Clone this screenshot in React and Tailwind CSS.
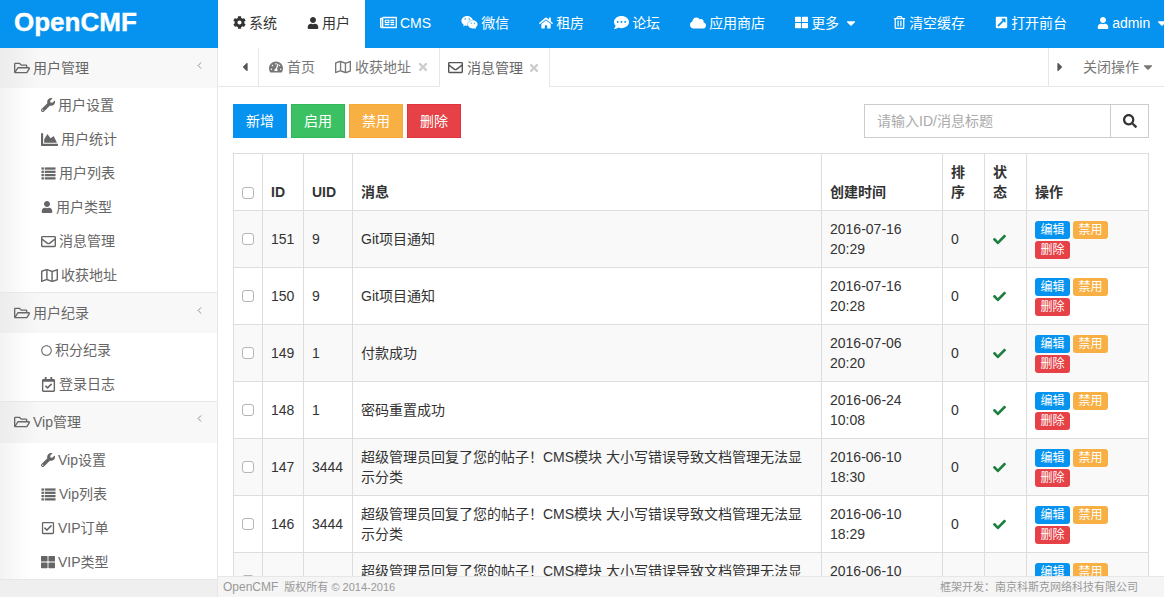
import {
  FaCaretDown, FaCaretLeft, FaCaretRight, FaChartArea, FaCheck, FaCloud, FaCog, FaCommentDots,
  FaExternalLinkSquareAlt, FaHome, FaRegCalendarCheck, FaRegCheckSquare, FaRegCircle, FaRegEnvelope,
  FaRegFolderOpen, FaRegMap, FaRegNewspaper, FaRegTrashAlt, FaSearch, FaTachometerAlt, FaThLarge, FaTimes,
  FaUser, FaWeixin, FaWrench,
} from 'react-icons/fa';
import { ChevronLeft } from 'lucide-react';

const font = { fontFamily: '"Liberation Sans", "Noto Sans CJK SC", sans-serif' };

function ListIcon({ className }) {
  return (
    <svg viewBox="0 0 16 16" fill="currentColor" width="1em" height="1em" className={className}>
      <rect x="0.5" y="1.5" width="2.6" height="2.4" />
      <rect x="4" y="1.5" width="11.5" height="2.4" />
      <rect x="0.5" y="5" width="2.6" height="2.4" />
      <rect x="4" y="5" width="11.5" height="2.4" />
      <rect x="0.5" y="8.5" width="2.6" height="2.4" />
      <rect x="4" y="8.5" width="11.5" height="2.4" />
      <rect x="0.5" y="12" width="2.6" height="2.4" />
      <rect x="4" y="12" width="11.5" height="2.4" />
    </svg>
  );
}

const topNav = [
  { icon: FaRegNewspaper, label: 'CMS', size: 'text-[17px]' },
  { icon: FaWeixin, label: '微信', size: 'text-[17px]' },
  { icon: FaHome, label: '租房', size: 'text-[14px]' },
  { icon: FaCommentDots, label: '论坛', size: 'text-[15px]' },
  { icon: FaCloud, label: '应用商店', size: 'text-[16px]' },
];

const sideMenu = [
  {
    title: '用户管理',
    head: 'h-10',
    items: [
      { icon: FaWrench, label: '用户设置', size: 'text-[14px]' },
      { icon: FaChartArea, label: '用户统计', size: 'text-[17px]' },
      { icon: ListIcon, label: '用户列表', size: 'text-[15px]' },
      { icon: FaUser, label: '用户类型', size: 'text-[12px]' },
      { icon: FaRegEnvelope, label: '消息管理', size: 'text-[15px]' },
      { icon: FaRegMap, label: '收获地址', size: 'text-[17px]' },
    ],
  },
  {
    title: '用户纪录',
    head: 'h-[41px] border-t border-[#e7e7e7]',
    items: [
      { icon: FaRegCircle, label: '积分纪录', size: 'text-[11px]' },
      { icon: FaRegCalendarCheck, label: '登录日志', size: 'text-[15px]' },
    ],
  },
  {
    title: 'Vip管理',
    head: 'h-[42px] border-t border-[#e7e7e7] pb-[2px]',
    items: [
      { icon: FaWrench, label: 'Vip设置', size: 'text-[14px]' },
      { icon: ListIcon, label: 'Vip列表', size: 'text-[15px]' },
      { icon: FaRegCheckSquare, label: 'VIP订单', size: 'text-[14px]' },
      { icon: FaThLarge, label: 'VIP类型', size: 'text-[14px]' },
    ],
  },
];

const longMsg = '超级管理员回复了您的帖子！CMS模块 大小写错误导致文档管理无法显示分类';

const rows = [
  { id: 151, uid: 9, msg: 'Git项目通知', date: '2016-07-16', time: '20:29' },
  { id: 150, uid: 9, msg: 'Git项目通知', date: '2016-07-16', time: '20:28' },
  { id: 149, uid: 1, msg: '付款成功', date: '2016-07-06', time: '20:20' },
  { id: 148, uid: 1, msg: '密码重置成功', date: '2016-06-24', time: '10:08' },
  { id: 147, uid: 3444, msg: longMsg, date: '2016-06-10', time: '18:30' },
  { id: 146, uid: 3444, msg: longMsg, date: '2016-06-10', time: '18:29' },
  { id: 145, uid: 3444, msg: longMsg, date: '2016-06-10', time: '18:28' },
];

function Checkbox({ className = '' }) {
  return <input type="checkbox" className={`block h-[12px] w-[12px] appearance-none rounded-[3px] border border-[#b5b5b5] bg-white ${className}`} />;
}

function Label({ color, children }) {
  return <span className={`inline-block h-[18px] w-[35px] rounded-[3px] text-center text-[12px] leading-[18px] text-white ${color}`}>{children}</span>;
}

function NavItem({ icon: Icon, label, active, caret, size = 'text-[13px]' }) {
  return (
    <a className={`flex h-12 shrink-0 items-center gap-[3px] px-[15px] pb-[3px] text-sm ${active ? 'bg-white text-[#333]' : 'text-white'}`}>
      <Icon className={`shrink-0 ${size}`} />
      <span>{label}</span>
      {caret && <FaCaretDown className="ml-[2px] text-[14px]" />}
    </a>
  );
}

function Sidebar() {
  return (
    <aside className="flex w-[218px] shrink-0 flex-col overflow-hidden border-r border-[#e7e7e7] bg-white text-sm text-[#666]">
      {sideMenu.map((group) => (
        <div key={group.title}>
          <div className={`flex items-center justify-between bg-gradient-to-r from-[#ececec] to-[#f8f8f8] to-[40px] pl-[14px] pr-[12px] ${group.head}`}>
            <span className="flex items-center gap-[3px]">
              <FaRegFolderOpen className="text-[16px]" />
              {group.title}
            </span>
            <ChevronLeft size={11} strokeWidth={1.75} className="mb-[6px] text-[#777]" />
          </div>
          <ul>
            {group.items.map((item) => (
              <li key={item.label} className="flex h-[34px] items-center gap-[3px] bg-gradient-to-r from-[#f3f3f3] to-white to-[30px] pl-[41px]">
                <item.icon className={`shrink-0 ${item.size}`} />
                {item.label}
              </li>
            ))}
          </ul>
        </div>
      ))}
      <div className="flex-1 border-t border-[#e7e7e7] bg-[#efefef]" />
    </aside>
  );
}

function TabBar() {
  return (
    <div className="flex h-[39px] shrink-0 items-stretch border-b border-[#e7e7e7] text-sm text-[#777]">
      <div className="flex w-[41px] items-center justify-end border-r border-[#e7e7e7] pr-[6px]">
        <FaCaretLeft className="text-[14px] text-[#555]" />
      </div>
      <div className="flex items-center gap-[4px] pl-[10px] pr-[20px]">
        <FaTachometerAlt className="text-[14px]" />
        首页
      </div>
      <div className="flex items-center gap-[4px] pr-[10px]">
        <FaRegMap className="text-[16px]" />
        收获地址
        <FaTimes className="ml-[2px] text-[12px] text-[#ccc]" />
      </div>
      <div className="-mb-px flex items-center gap-[4px] border-x border-[#e7e7e7] bg-white pl-[8px] pr-[9px] text-[#666]">
        <FaRegEnvelope className="text-[15px] text-[#555]" />
        消息管理
        <FaTimes className="ml-[1px] text-[12px] text-[#ccc]" />
      </div>
      <div className="ml-auto flex w-[116px] items-center border-l border-[#e7e7e7] pl-[4px]">
        <FaCaretRight className="text-[14px] text-[#555]" />
        <span className="ml-[16px]">关闭操作</span>
        <FaCaretDown className="ml-[2px] text-[14px]" />
      </div>
    </div>
  );
}

function Toolbar() {
  const btns = [
    ['新增', 'bg-[#0593ef] border-[#0593ef]'],
    ['启用', 'bg-[#3bc163] border-[#2fb858]'],
    ['禁用', 'bg-[#f8b044] border-[#f6a935]'],
    ['删除', 'bg-[#e64146] border-[#e2323a]'],
  ];
  return (
    <div className="mb-[15px] flex w-[916px] items-center justify-between">
      <div className="flex gap-1">
        {btns.map(([text, color]) => (
          <button key={text} className={`h-[34px] w-[54px] border text-sm text-white ${color}`}>{text}</button>
        ))}
      </div>
      <div className="flex h-[34px] w-[285px] border border-[#ccc]">
        <div className="flex flex-1 items-center px-3 text-sm text-[#aaa]">请输入ID/消息标题</div>
        <div className="flex w-[38px] items-center justify-center border-l border-[#ccc] text-[#333]">
          <FaSearch className="text-[14px]" />
        </div>
      </div>
    </div>
  );
}

function MessageTable() {
  const th = 'border border-[#ddd] p-2 text-left align-bottom font-bold';
  const td = 'border border-[#ddd] p-2 align-middle';
  return (
    <table className="w-[915px] table-fixed border-collapse text-sm leading-5 text-[#333]">
      <colgroup>
        <col className="w-[29px]" />
        <col className="w-[41px]" />
        <col className="w-[49px]" />
        <col className="w-[469px]" />
        <col className="w-[121px]" />
        <col className="w-[42px]" />
        <col className="w-[42px]" />
        <col className="w-[122px]" />
      </colgroup>
      <thead>
        <tr>
          <th className={th}><Checkbox className="mb-[3px]" /></th>
          <th className={th}>ID</th>
          <th className={th}>UID</th>
          <th className={th}>消息</th>
          <th className={th}>创建时间</th>
          <th className={th}>排序</th>
          <th className={th}>状态</th>
          <th className={th}>操作</th>
        </tr>
      </thead>
      <tbody>
        {rows.map((row, i) => (
          <tr key={row.id} className={i % 2 === 0 ? 'bg-[#f9f9f9]' : 'bg-white'}>
            <td className={td}><Checkbox /></td>
            <td className={td}>{row.id}</td>
            <td className={td}>{row.uid}</td>
            <td className={td}>{row.msg}</td>
            <td className={td}>{row.date}<br />{row.time}</td>
            <td className={td}>0</td>
            <td className={td}><FaCheck className="text-[13px] text-[#1f7f40]" /></td>
            <td className={td}>
              <div className="mt-[2px] flex h-[38px] w-[80px] flex-wrap gap-x-[3px] gap-y-[2px]">
                <Label color="bg-[#0593ef]">编辑</Label>
                <Label color="bg-[#f8b044]">禁用</Label>
                <Label color="bg-[#e64146]">删除</Label>
              </div>
            </td>
          </tr>
        ))}
      </tbody>
    </table>
  );
}

export default function App() {
  return (
    <div className="flex h-[597px] w-[1164px] flex-col overflow-hidden bg-white" style={font}>
      <header className="flex h-12 shrink-0 overflow-hidden bg-[#0593ef]">
        <div className="flex w-[218px] shrink-0 items-center pb-[3px] pl-[14px] text-[26px] font-bold text-white [-webkit-text-stroke:0.4px_white]">OpenCMF</div>
        <NavItem icon={FaCog} label="系统" active />
        <NavItem icon={FaUser} label="用户" active size="text-[12px]" />
        {topNav.map((item) => (
          <NavItem key={item.label} icon={item.icon} label={item.label} size={item.size} />
        ))}
        <NavItem icon={FaThLarge} label="更多" caret />
        <div className="ml-[5px] flex">
          <NavItem icon={FaRegTrashAlt} label="清空缓存" />
          <NavItem icon={FaExternalLinkSquareAlt} label="打开前台" />
          <NavItem icon={FaUser} label="admin" caret size="text-[12px]" />
        </div>
      </header>
      <div className="flex min-h-0 flex-1">
        <Sidebar />
        <main className="flex min-w-0 flex-1 flex-col">
          <TabBar />
          <div className="min-h-0 flex-1 overflow-hidden px-[15px] pt-[17px]">
            <Toolbar />
            <MessageTable />
          </div>
          <footer className="flex h-[21px] shrink-0 items-center justify-between border-t border-[#e7e7e7] bg-[#f5f5f5] pl-[5px] pr-[26px] text-[11px] text-[#999]">
            <span><span className="mr-[6px] text-[12px]">OpenCMF</span>版权所有 © 2014-2016</span>
            <span>框架开发：南京科斯克网络科技有限公司</span>
          </footer>
        </main>
      </div>
    </div>
  );
}
